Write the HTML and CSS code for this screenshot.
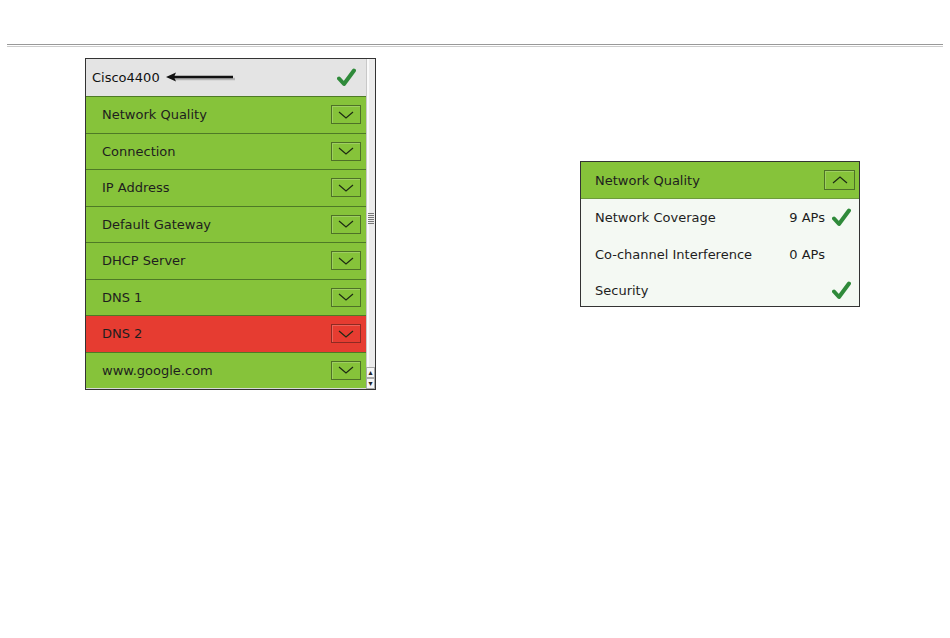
FILE: index.html
```html
<!DOCTYPE html>
<html lang="en">
<head>
    <meta charset="UTF-8">
    <title>Network Check</title>
    <link rel="stylesheet" href="styles.css">
</head>
<body>

<div class="top-rule"></div>

<div class="stage">
    <div class="device-panel">
        <div class="device-list">
            <div class="device-head">
                <span>Cisco4400</span>
                <svg class="pointer" width="70" height="12" viewBox="0 0 70 12">
                    <line x1="8" y1="7" x2="69" y2="7" stroke="#888" stroke-width="2.5" opacity="0.5"/>
                    <line x1="6" y1="5" x2="67" y2="5" stroke="#111" stroke-width="2.5"/>
                    <path d="M0 5 L10 0.5 L8 5 L10 9.5 Z" fill="#111"/>
                </svg>
                <svg class="check" width="19" height="19" viewBox="0 0 19 19">
                    <path d="M2 10.5 L7 16 L17 2.5" fill="none" stroke="#2f8a3a" stroke-width="4" stroke-linecap="round" stroke-linejoin="round"/>
                </svg>
            </div>
            <div class="check-row">Network Quality<span class="toggle"><svg width="16" height="8" viewBox="0 0 16 8"><polyline points="1,1 8,7 15,1" fill="none" stroke="#1d2a14" stroke-width="1.2"/></svg></span></div>
            <div class="check-row">Connection<span class="toggle"><svg width="16" height="8" viewBox="0 0 16 8"><polyline points="1,1 8,7 15,1" fill="none" stroke="#1d2a14" stroke-width="1.2"/></svg></span></div>
            <div class="check-row">IP Address<span class="toggle"><svg width="16" height="8" viewBox="0 0 16 8"><polyline points="1,1 8,7 15,1" fill="none" stroke="#1d2a14" stroke-width="1.2"/></svg></span></div>
            <div class="check-row">Default Gateway<span class="toggle"><svg width="16" height="8" viewBox="0 0 16 8"><polyline points="1,1 8,7 15,1" fill="none" stroke="#1d2a14" stroke-width="1.2"/></svg></span></div>
            <div class="check-row">DHCP Server<span class="toggle"><svg width="16" height="8" viewBox="0 0 16 8"><polyline points="1,1 8,7 15,1" fill="none" stroke="#1d2a14" stroke-width="1.2"/></svg></span></div>
            <div class="check-row">DNS 1<span class="toggle"><svg width="16" height="8" viewBox="0 0 16 8"><polyline points="1,1 8,7 15,1" fill="none" stroke="#1d2a14" stroke-width="1.2"/></svg></span></div>
            <div class="check-row failed">DNS 2<span class="toggle"><svg width="16" height="8" viewBox="0 0 16 8"><polyline points="1,1 8,7 15,1" fill="none" stroke="#1d2a14" stroke-width="1.2"/></svg></span></div>
            <div class="check-row">www.google.com<span class="toggle"><svg width="16" height="8" viewBox="0 0 16 8"><polyline points="1,1 8,7 15,1" fill="none" stroke="#1d2a14" stroke-width="1.2"/></svg></span></div>
        </div>
        <div class="scrollbar">
            <div class="grip"></div>
            <div class="scroll-space"></div>
            <div class="scroll-btn">&#9652;</div>
            <div class="scroll-btn">&#9662;</div>
        </div>
    </div>

    <div class="detail-panel">
        <div class="detail-head">Network Quality<span class="toggle"><svg width="16" height="8" viewBox="0 0 16 8"><polyline points="1,7 8,1 15,7" fill="none" stroke="#1d2a14" stroke-width="1.2"/></svg></span></div>
        <div class="detail-row">
            <span class="label">Network Coverage</span>
            <span class="value">9 APs</span>
            <span class="mark">
                <svg width="19" height="19" viewBox="0 0 19 19">
                    <path d="M2 10.5 L7 16 L17 2.5" fill="none" stroke="#2f8a3a" stroke-width="4" stroke-linecap="round" stroke-linejoin="round"/>
                </svg>
            </span>
        </div>
        <div class="detail-row">
            <span class="label">Co-channel Interference</span>
            <span class="value">0 APs</span>
            <span class="mark"></span>
        </div>
        <div class="detail-row last">
            <span class="label">Security</span>
            <span class="value"></span>
            <span class="mark">
                <svg width="19" height="19" viewBox="0 0 19 19">
                    <path d="M2 10.5 L7 16 L17 2.5" fill="none" stroke="#2f8a3a" stroke-width="4" stroke-linecap="round" stroke-linejoin="round"/>
                </svg>
            </span>
        </div>
    </div>
</div>

</body>
</html>
```

FILE: styles.css
```css
body {
    margin: 0;
    font-family: "DejaVu Sans", Verdana, sans-serif;
    font-size: 13px;
    color: #1e1e1e;
    background: white;
}
.top-rule {
    margin: 44px 7px 0 7px;
    height: 1px;
    border-top: 1px solid #999;
    border-bottom: 1px solid #ccc;
}
.stage {
    display: flex;
    align-items: flex-start;
    padding: 11px 0 0 85px;
}
.device-panel {
    display: flex;
    width: 289px;
    border: 1px solid #333;
}
.device-list {
    width: 281px;
    padding-bottom: 1px;
    background: #d9d9d9;
}
.device-head {
    display: flex;
    align-items: center;
    height: 37px;
    padding: 0 10px 0 6px;
    background: #e4e4e4;
    color: #111;
}
.pointer {
    margin-left: 6px;
}
.device-head .check {
    margin-left: auto;
}
.check-row {
    display: flex;
    align-items: center;
    justify-content: space-between;
    height: 35.5px;
    padding: 0 5px 0 16px;
    background: #86c33a;
    border-top: 1px solid #4e7a26;
}
.check-row.failed {
    background: #e63c31;
}
.toggle {
    display: flex;
    align-items: center;
    justify-content: center;
    width: 28px;
    height: 17px;
    border: 1px solid #4e7127;
    box-shadow: inset 1px 1px 0 rgba(255,255,255,0.2);
}
.failed .toggle {
    border-color: #8e2a22;
}
.scrollbar {
    display: flex;
    flex-direction: column;
    width: 8px;
    background: #ececec;
    border-left: 1px solid #c8c8c8;
    box-shadow: inset 2px 0 0 #fafafa;
}
.grip {
    flex: none;
    width: 6px;
    height: 12px;
    margin: 154px 0 0 1px;
    background: repeating-linear-gradient(#777 0 1px, transparent 1px 2px);
}
.scroll-space {
    flex: 1;
}
.scroll-btn {
    height: 9px;
    margin-left: -1px;
    font-size: 8px;
    line-height: 9px;
    text-align: center;
    background: #f6f6f6;
    border: 1px solid #aaa;
    color: #222;
}
.detail-panel {
    width: 278px;
    margin: 103px 0 0 204px;
    border: 1px solid #333;
    background: #f4f9f3;
}
.detail-head {
    display: flex;
    align-items: center;
    justify-content: space-between;
    height: 36px;
    padding: 0 4px 0 14px;
    background: #86c33a;
    border-bottom: 1px solid #6d9b3b;
}
.detail-head .toggle {
    width: 29px;
    height: 18px;
}
.detail-row {
    display: flex;
    align-items: center;
    height: 37px;
    padding: 0 8px 0 14px;
}
.detail-row.last {
    height: 31px;
    padding-top: 2px;
}
.detail-row .label {
    flex: 1;
}
.detail-row .value {
    text-align: right;
}
.mark {
    display: flex;
    justify-content: flex-end;
    width: 26px;
}
```
